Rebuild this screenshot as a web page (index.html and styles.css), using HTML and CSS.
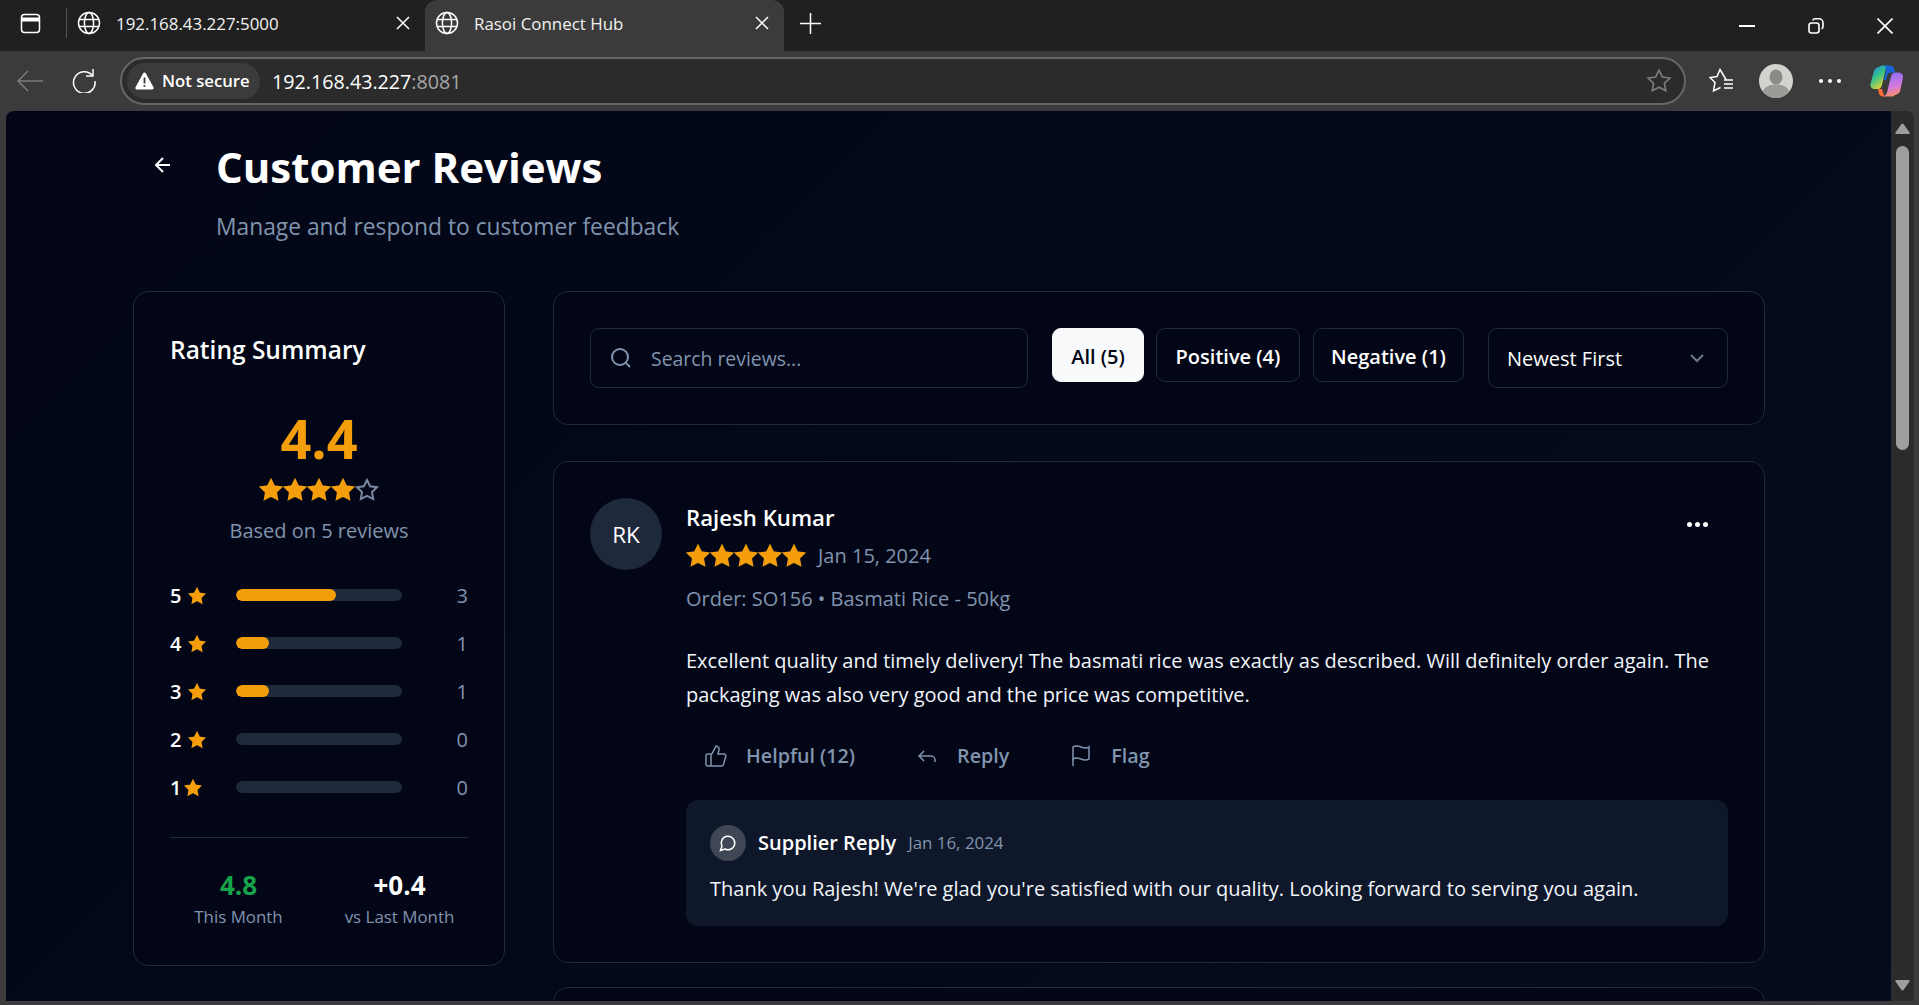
FILE: index.html

```html
<!DOCTYPE html>
<html lang="en">
<head>
  <meta charset="UTF-8" />
  <title>Rasoi Connect Hub</title>
  <link rel="stylesheet" href="styles.css">
</head>
<body>
  <svg class="sprite" width="0" height="0" aria-hidden="true">
    <symbol id="i-star" viewBox="0 0 24 24"><polygon points="12 2 15.09 8.26 22 9.27 17 14.14 18.18 21.02 12 17.77 5.82 21.02 7 14.14 2 9.27 8.91 8.26 12 2"/></symbol>
    <symbol id="i-globe" viewBox="0 0 24 24"><circle cx="12" cy="12" r="10.5"/><ellipse cx="12" cy="12" rx="4.6" ry="10.5"/><path d="M2 8.5h20M2 15.5h20"/></symbol>
    <symbol id="i-close" viewBox="0 0 14 14"><path d="M1 1l12 12M13 1L1 13"/></symbol>
  </svg>

  <!-- browser chrome -->
  <div class="tabbar">
    <svg class="panel-icon icon-line" viewBox="0 0 21 21"><rect x="1.5" y="1.5" width="18" height="18" rx="3"/><path d="M1.5 6.5h18" stroke-width="4"/></svg>
    <span class="tab-divider"></span>
    <div class="tab">
      <svg class="globe icon-line"><use href="#i-globe"/></svg>
      <span>192.168.43.227:5000</span>
      <svg class="tab-close icon-line"><use href="#i-close"/></svg>
    </div>
    <div class="tab tab-active">
      <svg class="globe icon-line"><use href="#i-globe"/></svg>
      <span>Rasoi Connect Hub</span>
      <svg class="tab-close icon-line"><use href="#i-close"/></svg>
    </div>
    <svg class="new-tab icon-line" viewBox="0 0 21 21"><path d="M10.5 0v21M0 10.5h21"/></svg>
    <div class="window-controls">
      <span class="win-btn"><svg class="icon-line" width="16" height="16" viewBox="0 0 16 16"><path d="M0 8h16" stroke-width="2"/></svg></span>
      <span class="win-btn"><svg class="icon-line" width="16" height="16" viewBox="0 0 16 16"><rect x="1" y="5" width="10" height="10" rx="2.5" stroke-width="1.6"/><path d="M5 2.5c0-1 1-1.7 2-1.7h4c2.2 0 4 1.8 4 4v4c0 1-.6 1.8-1.5 2" stroke-width="1.6"/></svg></span>
      <span class="win-btn"><svg class="icon-line" width="16" height="16" viewBox="0 0 16 16"><path d="M.5.5l15 15M15.5.5l-15 15" stroke-width="1.6"/></svg></span>
    </div>
  </div>

  <div class="toolbar">
    <span class="tool-btn"><svg class="icon-line dim" width="26" height="22" viewBox="0 0 26 22"><path d="M11 1L1 11l10 10M1 11h25"/></svg></span>
    <span class="tool-btn"><svg class="icon-line" width="24" height="24" viewBox="0 0 24 24" stroke-width="1.8"><path d="M20.5 6.5A10.8 10.8 0 1 0 23 12"/><path d="M21 0v7h-7"/></svg></span>
    <div class="omnibox">
      <span class="secure-pill">
        <svg width="19" height="18" viewBox="0 0 19 18"><path fill="#fff" d="M9.5 0.5c.6 0 1 .3 1.3.8l7.7 14c.5 1-.1 2.2-1.3 2.2H1.800c-1.200 0-1.800-1.200-1.300-2.200l7.700-14c.3-.5.700-.8 1.300-.8z"/><path stroke="#3b3b3b" stroke-width="1.800" d="M9.500 5.500v6M9.500 13v1.800"/></svg>
        Not secure
      </span>
      <span class="url">192.168.43.227<span class="url-port">:8081</span></span>
      <svg class="omni-star icon-line dim" viewBox="0 0 24 24" stroke-width="1.500"><use href="#i-star"/></svg>
    </div>
    <span class="tool-btn"><svg width="26" height="26" viewBox="0 0 26 26" class="icon-line" stroke-width="1.600"><path d="M17 11.500L11 1.500 8 8.500 1 9.500l5 5-1.500 8.500 7-3.500"/><path d="M15 12h9M15 16h9M15 20h9" stroke-width="1.400"/></svg></span>
    <span class="tool-btn"><svg width="34" height="34" viewBox="0 0 34 34"><circle cx="17" cy="17" r="17" fill="#d3d2cf"/><ellipse cx="17" cy="13" rx="6.500" ry="7.500" fill="#8d8b87"/><path fill="#9c9a96" d="M4 27c2-5 8-6.500 13-6.500S28 22 30 27c-3 4.500-8 7-13 7s-10-2.500-13-7z"/></svg></span>
    <span class="tool-btn"><span class="dots"><i></i><i></i><i></i></span></span>
    <span class="tool-btn tool-copilot">
      <svg width="34" height="32" viewBox="0 0 34 32">
        <defs>
          <linearGradient id="cp-a" x1="0" y1="0" x2="0.6" y2="1"><stop offset="0" stop-color="#1c7fe8"/><stop offset="0.5" stop-color="#37c48a"/><stop offset="1" stop-color="#f6d32b"/></linearGradient>
          <linearGradient id="cp-b" x1="0.4" y1="0" x2="0.6" y2="1"><stop offset="0" stop-color="#8d6cf0"/><stop offset="0.6" stop-color="#d77ae0"/><stop offset="1" stop-color="#f7915a"/></linearGradient>
        </defs>
        <path fill="url(#cp-a)" d="M9 2c1-1 2-1.500 4-1.500h6c-2 .5-3 2-3.500 4L12 20c-.5 2-2 4-4 4H5c-3 0-5-2-4.500-5L4 6c.5-2 3-4 5-4z"/>
        <path fill="url(#cp-b)" d="M25 30c-1 1-2 1.500-4 1.500h-8c2-.5 3.500-2 4-4l4-16c.5-2 2-4 4-4h3c3 0 5.500 2 5 5l-3 14c-.5 2-3 3-5 3.500z"/>
        <path fill="#1763d8" d="M13 .5h7c2 0 3.500 1 4 3l1 4h-4c-2 0-3.500 1.500-4 3.500l-1 4h-2l2-10c.3-2-1-4.500-3-4.500z"/>
        <path fill="#ff6b3d" d="M8 24h4l1.500 5c.3 1 .8 2 1.500 2.500H13c-2 0-3.500-1-4-3z"/>
      </svg>
    </span>
  </div>

  <div class="viewport">
    <main class="page">
      <header class="page-header">
        <svg class="back-icon icon-line" viewBox="0 0 24 24"><path d="m12 19-7-7 7-7"/><path d="M19 12H5"/></svg>
        <div>
          <h1>Customer Reviews</h1>
          <p class="subtitle">Manage and respond to customer feedback</p>
        </div>
      </header>

      <div class="content">
        <aside class="card summary">
          <h2>Rating Summary</h2>
          <div class="score">4.4</div>
          <div class="stars stars-center">
            <svg class="star"><use href="#i-star"/></svg>
            <svg class="star"><use href="#i-star"/></svg>
            <svg class="star"><use href="#i-star"/></svg>
            <svg class="star"><use href="#i-star"/></svg>
            <svg class="star star-empty"><use href="#i-star"/></svg>
          </div>
          <p class="based-on">Based on 5 reviews</p>

          <div class="breakdown">
            <div class="bar-row">
              <span class="bar-label">5 <svg class="star-sm"><use href="#i-star"/></svg></span>
              <span class="bar"><span class="bar-fill" style="width: 60%"></span></span>
              <span class="bar-count">3</span>
            </div>
            <div class="bar-row">
              <span class="bar-label">4 <svg class="star-sm"><use href="#i-star"/></svg></span>
              <span class="bar"><span class="bar-fill" style="width: 20%"></span></span>
              <span class="bar-count">1</span>
            </div>
            <div class="bar-row">
              <span class="bar-label">3 <svg class="star-sm"><use href="#i-star"/></svg></span>
              <span class="bar"><span class="bar-fill" style="width: 20%"></span></span>
              <span class="bar-count">1</span>
            </div>
            <div class="bar-row">
              <span class="bar-label">2 <svg class="star-sm"><use href="#i-star"/></svg></span>
              <span class="bar"></span>
              <span class="bar-count">0</span>
            </div>
            <div class="bar-row">
              <span class="bar-label bar-label-one">1 <svg class="star-sm"><use href="#i-star"/></svg></span>
              <span class="bar"></span>
              <span class="bar-count">0</span>
            </div>
          </div>

          <div class="trend">
            <div>
              <div class="trend-value green">4.8</div>
              <div class="trend-label">This Month</div>
            </div>
            <div>
              <div class="trend-value">+0.4</div>
              <div class="trend-label">vs Last Month</div>
            </div>
          </div>
        </aside>

        <section class="reviews">
          <div class="card filters">
            <label class="search">
              <svg class="search-icon" viewBox="0 0 24 24"><circle cx="11" cy="11" r="8"/><path d="m21 21-4.350-4.350"/></svg>
              <input type="text" placeholder="Search reviews...">
            </label>
            <div class="filter-btns">
              <button class="filter-btn filter-all">All (5)</button>
              <button class="filter-btn filter-positive">Positive (4)</button>
              <button class="filter-btn filter-negative">Negative (1)</button>
            </div>
            <div class="sort">
              Newest First
              <svg class="chevron" viewBox="0 0 24 24"><path d="m6 9 6 6 6-6"/></svg>
            </div>
          </div>

          <article class="card review">
            <div class="avatar">RK</div>
            <div class="review-body">
              <div class="review-top">
                <div>
                  <div class="reviewer">Rajesh Kumar</div>
                  <div class="review-meta">
                    <span class="stars">
                      <svg class="star"><use href="#i-star"/></svg>
                      <svg class="star"><use href="#i-star"/></svg>
                      <svg class="star"><use href="#i-star"/></svg>
                      <svg class="star"><use href="#i-star"/></svg>
                      <svg class="star"><use href="#i-star"/></svg>
                    </span>
                    <span class="muted">Jan 15, 2024</span>
                  </div>
                  <p class="order muted">Order: SO156 • Basmati Rice - 50kg</p>
                </div>
                <span class="more-btn"><span class="dots dots-sm"><i></i><i></i><i></i></span></span>
              </div>

              <p class="review-text">Excellent quality and timely delivery! The basmati rice was exactly as described. Will definitely order again. The packaging was also very good and the price was competitive.</p>

              <div class="actions">
                <button class="action">
                  <svg viewBox="0 0 24 24"><path d="M7 10v12"/><path d="M15 5.880 14 10h5.830a2 2 0 0 1 1.920 2.560l-2.330 8A2 2 0 0 1 17.500 22H4a2 2 0 0 1-2-2v-8a2 2 0 0 1 2-2h2.760a2 2 0 0 0 1.790-1.110L12 2a3.130 3.130 0 0 1 3 3.880Z"/></svg>
                  Helpful (12)
                </button>
                <button class="action">
                  <svg viewBox="0 0 24 24"><path d="M9 17 4 12l5-5"/><path d="M20 18v-2a4 4 0 0 0-4-4H4"/></svg>
                  Reply
                </button>
                <button class="action">
                  <svg viewBox="0 0 24 24"><path d="M4 15s1-1 4-1 5 2 8 2 4-1 4-1V3s-1 1-4 1-5-2-8-2-4 1-4 1z"/><path d="M4 22v-7"/></svg>
                  Flag
                </button>
              </div>

              <div class="supplier-reply">
                <div class="reply-head">
                  <span class="reply-icon"><svg viewBox="0 0 24 24"><path d="M7.900 20A9 9 0 1 0 4 16.100L2 22Z"/></svg></span>
                  <strong>Supplier Reply</strong>
                  <span class="reply-date">Jan 16, 2024</span>
                </div>
                <p class="reply-text">Thank you Rajesh! We're glad you're satisfied with our quality. Looking forward to serving you again.</p>
              </div>
            </div>
          </article>

          <article class="card review review-next"></article>
        </section>
      </div>
    </main>

    <div class="scrollbar">
      <svg class="scroll-arrow" viewBox="0 0 15 11"><path d="M7.500 0.500c.5 0 .9.300 1.200.8l5.800 8.200c.3.600 0 1.500-.8 1.500H1.300c-.8 0-1.100-.9-.8-1.500l5.800-8.200c.3-.5.700-.8 1.200-.8z"/></svg>
      <div class="scroll-thumb"></div>
      <svg class="scroll-arrow scroll-arrow-down" viewBox="0 0 15 11"><path d="M7.500 0.500c.5 0 .9.300 1.200.8l5.800 8.200c.3.600 0 1.500-.8 1.500H1.300c-.8 0-1.100-.9-.8-1.500l5.800-8.200c.3-.5.700-.8 1.200-.8z"/></svg>
    </div>
  </div>
</body>
</html>
```

FILE: styles.css

```css
* {
  box-sizing: border-box;
}
html, body {
  margin: 0;
  height: 1005px;
  overflow: hidden;
}
body {
  display: flex;
  flex-direction: column;
  background-color: #3b3b3b;
  color: #f8fafc;
  font-family: "Open Sans", "Noto Sans", sans-serif;
  font-size: 20px;
}
p, h1, h2 {
  margin: 0;
}
button {
  font: inherit;
  background: none;
  border: none;
  color: inherit;
}
.sprite {
  position: absolute;
}
.icon-line {
  fill: none;
  stroke: #fff;
  stroke-width: 1.5;
}
.dim {
  stroke: #7c7c7c;
}

/* browser chrome */
.tabbar {
  display: flex;
  align-items: center;
  flex: none;
  height: 51px;
  background-color: #202020;
  font-size: 16.9px;
  color: #f2f2f2;
}
.panel-icon {
  width: 21px;
  height: 21px;
  margin-left: 20px;
  margin-bottom: 5px;
}
.tab-divider {
  width: 1px;
  height: 30px;
  margin-left: 25px;
  margin-bottom: 5px;
  background-color: #555;
}
.tab {
  display: flex;
  align-items: center;
  gap: 15px;
  width: 358px;
  height: 51px;
  padding: 0 15px 5px 10px;
}
.tab-active {
  width: 359px;
  background-color: #3b3b3b;
  border-radius: 12px 12px 0 0;
}
.globe {
  width: 24px;
  height: 24px;
}
.tab-close {
  width: 14px;
  height: 14px;
  margin-left: auto;
}
.new-tab {
  width: 21px;
  height: 21px;
  margin-left: 16px;
  margin-bottom: 5px;
}
.window-controls {
  display: flex;
  margin-left: auto;
}
.win-btn {
  display: flex;
  align-items: center;
  justify-content: center;
  width: 69px;
  height: 51px;
}
.toolbar {
  display: flex;
  align-items: center;
  flex: none;
  height: 60px;
  padding-left: 3px;
  background-color: #3b3b3b;
}
.tool-btn {
  display: flex;
  align-items: center;
  justify-content: center;
  flex: none;
  width: 54px;
  height: 48px;
}
.tool-copilot {
  margin-left: 3px;
  margin-right: 5px;
}
.omnibox {
  display: flex;
  align-items: center;
  flex: 1;
  height: 48px;
  margin: 0 9px;
  padding-left: 5px;
  padding-right: 12px;
  background-color: #2b2b2b;
  border: 2px solid #666;
  border-radius: 24px;
}
.secure-pill {
  display: flex;
  align-items: center;
  gap: 8px;
  width: 133px;
  height: 36px;
  padding: 0 0 1px 8px;
  background-color: #3b3b3b;
  border-radius: 18px;
  font-size: 16.7px;
  font-weight: 600;
  color: #fff;
}
.url {
  margin-left: 12px;
  font-size: 19.7px;
  color: #fff;
}
.url-port {
  color: #a6a6a6;
}
.omni-star {
  width: 26px;
  height: 26px;
  margin-left: auto;
}
.dots {
  display: flex;
  gap: 5px;
}
.dots i {
  width: 4px;
  height: 4px;
  background-color: #fff;
  border-radius: 50%;
}
.dots-sm {
  gap: 3px;
}
.dots-sm i {
  width: 5px;
  height: 5px;
}

/* page */
.viewport {
  display: flex;
  height: 890px;
  margin: 0 5px 4px 6px;
  border-radius: 8px 8px 0 0;
  overflow: hidden;
}
.page {
  flex: 1;
  min-width: 0;
  padding: 30px 126px 0 127px;
  background: linear-gradient(135deg, #020617, #050c1b);
  overflow: hidden;
}
.scrollbar {
  display: flex;
  flex-direction: column;
  align-items: center;
  flex: none;
  width: 23px;
  padding: 12px 0 10px;
  background-color: #2b2b2b;
}
.scroll-arrow {
  flex: none;
  width: 15px;
  height: 11px;
  fill: #9e9e9e;
}
.scroll-arrow-down {
  margin-top: auto;
  transform: rotate(180deg);
}
.scroll-thumb {
  width: 13px;
  height: 304px;
  margin-top: 12px;
  background-color: #9e9e9e;
  border-radius: 7px;
}
.page-header {
  display: flex;
  gap: 41px;
  margin-bottom: 46px;
  padding-left: 18px;
}
.back-icon {
  flex: none;
  width: 24px;
  height: 24px;
  margin-top: 12px;
  stroke-width: 2;
}
h1 {
  margin-top: -1px;
  font-size: 42px;
  font-weight: 700;
  line-height: 54px;
  color: #fff;
}
.subtitle {
  margin-top: 15px;
  font-size: 22.8px;
  line-height: 36px;
  color: #8194ae;
}
.content {
  display: grid;
  grid-template-columns: 372px 1fr;
  align-items: start;
  gap: 48px;
}
.card {
  background-color: #020617;
  border: 1px solid #1e293b;
  border-radius: 15px;
}
.star {
  width: 24px;
  height: 24px;
  fill: #f59e0b;
  stroke: #f59e0b;
  stroke-width: 2;
}
.star-empty {
  fill: none;
  stroke: #7a8aa0;
}
.star-sm {
  width: 18px;
  height: 18px;
  fill: #f59e0b;
  stroke: #f59e0b;
  stroke-width: 2;
}
.stars {
  display: flex;
}
.muted {
  color: #8194ae;
}

/* rating summary */
.summary {
  padding: 36px 36px 36px;
}
h2 {
  padding-top: 1px;
  font-size: 24.5px;
  font-weight: 600;
  line-height: 42px;
  color: #fff;
}
.score {
  margin-top: 40px;
  font-size: 54px;
  font-weight: 700;
  line-height: 54px;
  text-align: center;
  color: #f59e0b;
}
.stars-center {
  justify-content: center;
  margin-top: 13px;
}
.based-on {
  margin-top: 13px;
  line-height: 31.5px;
  text-align: center;
  color: #8194ae;
}
.breakdown {
  margin-top: 24px;
}
.bar-row {
  display: flex;
  align-items: center;
  height: 48px;
}
.bar-label {
  display: flex;
  align-items: center;
  gap: 7px;
  flex: none;
  width: 66px;
  padding-top: 2px;
  font-weight: 600;
  color: #fff;
}
.bar-label-one {
  gap: 3px;
}
.bar {
  flex: none;
  width: 166px;
  height: 12px;
  background-color: #1e293b;
  border-radius: 6px;
  overflow: hidden;
}
.bar-fill {
  display: block;
  height: 100%;
  background-color: #f59e0b;
  border-radius: 6px;
}
.bar-count {
  flex: 1;
  padding-top: 2px;
  text-align: right;
  color: #8194ae;
}
.trend {
  display: grid;
  grid-template-columns: 1fr 1fr;
  gap: 24px;
  margin-top: 26px;
  padding-top: 27px;
  border-top: 1px solid #1e293b;
  text-align: center;
}
.trend-value {
  font-size: 26px;
  font-weight: 700;
  line-height: 40px;
  color: #fff;
}
.green {
  color: #16a34a;
}
.trend-label {
  font-size: 16.9px;
  line-height: 24px;
  color: #8194ae;
}

/* filters */
.reviews {
  display: flex;
  flex-direction: column;
  gap: 36px;
}
.filters {
  display: flex;
  gap: 24px;
  padding: 36px;
}
.search {
  display: flex;
  align-items: center;
  flex: 1;
  gap: 16px;
  height: 60px;
  padding-left: 18px;
  border: 1px solid #1e293b;
  border-radius: 9px;
  font-size: 19.4px;
}
.search-icon {
  flex: none;
  width: 24px;
  height: 24px;
  fill: none;
  stroke: #8194ae;
  stroke-width: 2;
}
.search input {
  flex: 1;
  min-width: 0;
  background: none;
  border: none;
  outline: none;
  font: inherit;
  color: #fff;
}
.search input::placeholder {
  color: #8194ae;
  opacity: 1;
}
.filter-btns {
  display: flex;
  align-items: flex-start;
  gap: 12px;
}
.filter-btn {
  height: 54px;
  padding: 2px 0 0;
  border: 1px solid #1e293b;
  border-radius: 9px;
  font-weight: 600;
  color: #fff;
}
.filter-all {
  width: 92px;
  background-color: #f8fafc;
  border-color: #f8fafc;
  color: #020617;
}
.filter-positive {
  width: 144px;
}
.filter-negative {
  width: 151px;
  margin-left: 1px;
}
.sort {
  display: flex;
  align-items: center;
  justify-content: space-between;
  flex: none;
  width: 240px;
  height: 60px;
  padding: 0 18px;
  border: 1px solid #1e293b;
  border-radius: 9px;
  color: #fff;
}
.chevron {
  width: 24px;
  height: 24px;
  fill: none;
  stroke: #6f7785;
  stroke-width: 2;
}

/* review card */
.review {
  display: flex;
  gap: 24px;
  padding: 36px;
}
.avatar {
  display: flex;
  align-items: center;
  justify-content: center;
  flex: none;
  width: 72px;
  height: 72px;
  background-color: #1e293b;
  border-radius: 50%;
  font-size: 22.5px;
  color: #fff;
}
.review-body {
  flex: 1;
  min-width: 0;
}
.review-top {
  display: flex;
  justify-content: space-between;
}
.reviewer {
  margin-top: 2px;
  font-size: 22.2px;
  font-weight: 600;
  line-height: 36px;
  color: #fff;
}
.review-meta {
  display: flex;
  align-items: center;
  gap: 12px;
  margin-top: 8px;
  line-height: 24px;
}
.order {
  margin-top: 15px;
  line-height: 31.5px;
}
.more-btn {
  display: flex;
  align-items: center;
  height: 52px;
  padding: 0 20px;
}
.review-text {
  margin-top: 29px;
  line-height: 34px;
  color: #f1f5f9;
}
.actions {
  display: flex;
  gap: 24px;
  margin-top: 20px;
}
.action {
  display: flex;
  align-items: center;
  gap: 18px;
  height: 48px;
  padding: 0 18px;
  font-size: 19.7px;
  font-weight: 600;
  color: #8194ae;
}
.action svg {
  width: 24px;
  height: 24px;
  fill: none;
  stroke: #8194ae;
  stroke-width: 1.5;
}
.supplier-reply {
  margin-top: 20px;
  padding: 25px 24px 22px;
  background-color: #0f172a;
  border-radius: 12px;
}
.reply-head {
  display: flex;
  align-items: center;
  gap: 12px;
  height: 36px;
}
.reply-head strong {
  font-weight: 600;
  color: #fff;
}
.reply-icon {
  display: flex;
  align-items: center;
  justify-content: center;
  width: 36px;
  height: 36px;
  background-color: #3f4754;
  border-radius: 50%;
}
.reply-icon svg {
  width: 18px;
  height: 18px;
  fill: none;
  stroke: #fff;
  stroke-width: 2;
}
.reply-date {
  font-size: 16.9px;
  color: #8194ae;
}
.reply-text {
  margin-top: 12px;
  line-height: 31.5px;
  color: #f1f5f9;
}
.review-next {
  height: 200px;
  margin-top: -12px;
}
```
